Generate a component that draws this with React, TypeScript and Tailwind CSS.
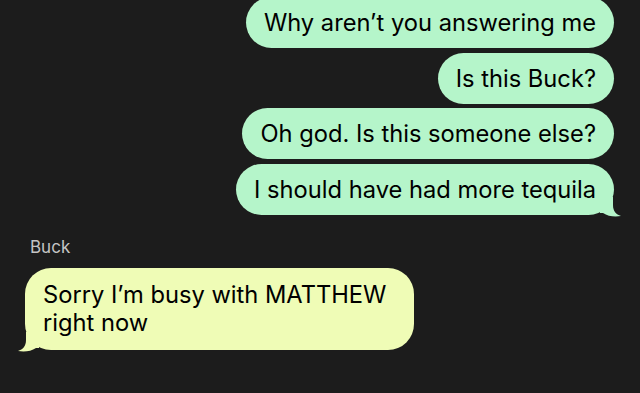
const SENT = "#b5f5ca";
const RECEIVED = "#effcb6";

type BubbleProps = {
  text: React.ReactNode;
  tail?: boolean;
  side: "sent" | "received";
};

const Tail = ({ color, flip }: { color: string; flip?: boolean }) => (
  <svg
    width="22"
    height="20"
    viewBox="0 0 22 20"
    className={
      flip
        ? "absolute left-[-8px] bottom-[-2px] -scale-x-100"
        : "absolute right-[-8px] bottom-[-2px]"
    }
  >
    <path
      d="M0 0 H13 V8 C13 14 16 17.5 21 19 C15 20 8 19.5 3 16 L0 16 Z"
      fill={color}
    />
  </svg>
);

const Bubble = ({ text, tail, side }: BubbleProps) => {
  const color = side === "sent" ? SENT : RECEIVED;
  return (
    <div
      className={
        side === "sent"
          ? "relative rounded-[26px] px-[18px] py-[12px] text-[23.7px] leading-[27px] text-black"
          : "relative rounded-[26px] px-[18px] py-[13px] text-[23.7px] leading-[28px] text-black"
      }
      style={{ backgroundColor: color }}
    >
      <span className="relative z-10">{text}</span>
      {tail && <Tail color={color} flip={side === "received"} />}
    </div>
  );
};

export default function App() {
  return (
    <div
      className="h-[393px] w-[640px] overflow-hidden bg-[#1c1c1c]"
      style={{ fontFamily: "Inter, 'Noto Sans', sans-serif" }}
    >
      <div className="-mt-[3px] flex flex-col items-end gap-[4.5px] pr-[26px]">
        <Bubble side="sent" text="Why aren’t you answering me" />
        <Bubble side="sent" text="Is this Buck?" />
        <Bubble side="sent" text="Oh god. Is this someone else?" />
        <Bubble side="sent" tail text="I should have had more tequila" />
      </div>
      <div className="mt-[22px] flex flex-col items-start pl-[25px]">
        <div className="mb-[11px] pl-[5px] text-[17px] leading-[20px] text-[#c4c4c4]">
          Buck
        </div>
        <div className="w-[389px]">
          <Bubble
            side="received"
            tail
            text={
              <>
                Sorry I’m busy with MATTHEW
                <br />
                right now
              </>
            }
          />
        </div>
      </div>
    </div>
  );
}
